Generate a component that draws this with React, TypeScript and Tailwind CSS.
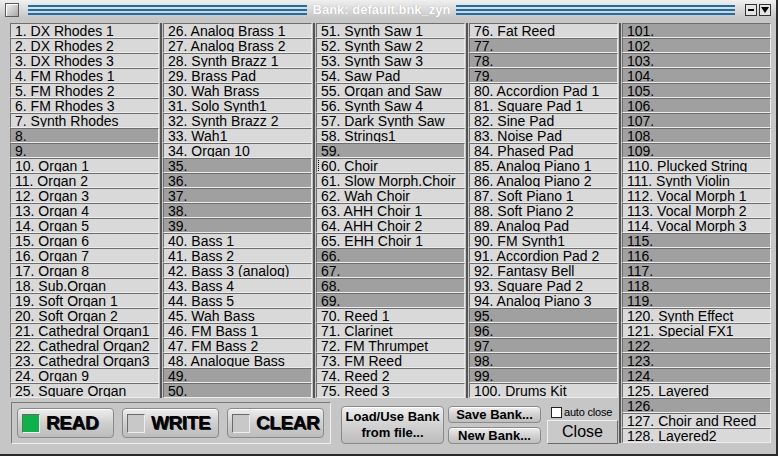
import React from "react";

type Slot = { n: number; name: string };

const names: Record<number, string> = {
  1: "DX Rhodes 1", 2: "DX Rhodes 2", 3: "DX Rhodes 3", 4: "FM Rhodes 1", 5: "FM Rhodes 2",
  6: "FM Rhodes 3", 7: "Synth Rhodes", 10: "Organ 1", 11: "Organ 2", 12: "Organ 3",
  13: "Organ 4", 14: "Organ 5", 15: "Organ 6", 16: "Organ 7", 17: "Organ 8",
  18: "Sub.Organ", 19: "Soft Organ 1", 20: "Soft Organ 2", 21: "Cathedral Organ1",
  22: "Cathedral Organ2", 23: "Cathedral Organ3", 24: "Organ 9", 25: "Square Organ",
  26: "Analog Brass 1", 27: "Analog Brass 2", 28: "Synth Brazz 1", 29: "Brass Pad",
  30: "Wah Brass", 31: "Solo Synth1", 32: "Synth Brazz 2", 33: "Wah1", 34: "Organ 10",
  40: "Bass 1", 41: "Bass 2", 42: "Bass 3 (analog)", 43: "Bass 4", 44: "Bass 5",
  45: "Wah Bass", 46: "FM Bass 1", 47: "FM Bass 2", 48: "Analogue Bass",
  51: "Synth Saw 1", 52: "Synth Saw 2", 53: "Synth Saw 3", 54: "Saw Pad",
  55: "Organ and Saw", 56: "Synth Saw 4", 57: "Dark Synth Saw", 58: "Strings1",
  60: "Choir", 61: "Slow Morph.Choir", 62: "Wah Choir", 63: "AHH Choir 1",
  64: "AHH Choir 2", 65: "EHH Choir 1", 70: "Reed 1", 71: "Clarinet",
  72: "FM Thrumpet", 73: "FM Reed", 74: "Reed 2", 75: "Reed 3", 76: "Fat Reed",
  80: "Accordion Pad 1", 81: "Square Pad 1", 82: "Sine Pad", 83: "Noise Pad",
  84: "Phased Pad", 85: "Analog Piano 1", 86: "Analog Piano 2", 87: "Soft Piano 1",
  88: "Soft Piano 2", 89: "Analog Pad", 90: "FM Synth1", 91: "Accordion Pad 2",
  92: "Fantasy Bell", 93: "Square Pad 2", 94: "Analog Piano 3", 100: "Drums Kit",
  110: "Plucked String", 111: "Synth Violin", 112: "Vocal Morph 1", 113: "Vocal Morph 2",
  114: "Vocal Morph 3", 120: "Synth Effect", 121: "Special FX1", 125: "Layered",
  127: "Choir and Reed", 128: "Layered2",
};

const slots = (from: number, to: number): Slot[] => {
  const out: Slot[] = [];
  for (let i = from; i <= to; i++) out.push({ n: i, name: names[i] ?? "" });
  return out;
};

const font = { fontFamily: '"Liberation Sans", Arial, sans-serif' };

function SlotButton({ slot }: { slot: Slot }) {
  const empty = slot.name === "";
  const selected = slot.n === 60;
  return (
    <div
      className={`h-[15px] border-t border-l border-t-[#6e6e6e] border-l-[#6e6e6e] border-b border-r border-b-[#ececec] border-r-[#ececec] pl-[4px] text-[14px] leading-[15px] text-black whitespace-nowrap overflow-hidden ${
        empty ? "bg-[#a0a0a0]" : "bg-[#d9d9d9]"
      }`}
    >
      <span
        className={
          selected
            ? "inline-block h-[13px] leading-[14px] align-top outline outline-1 outline-dotted outline-black -ml-[2px] pl-[2px] w-[145px]"
            : ""
        }
      >
        {slot.n}. {slot.name}
      </span>
    </div>
  );
}

function Column({ items }: { items: Slot[] }) {
  return (
    <div className="w-[149px] flex flex-col">
      {items.map((s) => (
        <SlotButton key={s.n} slot={s} />
      ))}
    </div>
  );
}

// dark divider line sitting in the gap between two columns
function Divider({ className = "" }: { className?: string }) {
  return <div className={`w-[2px] -mx-[3px] bg-[#555] ${className}`} />;
}

function Stripes() {
  return (
    <div className="flex-1 flex flex-col gap-[2px] justify-center">
      <div className="h-[2px] bg-[#1c6ea8]" />
      <div className="h-[2px] bg-[#1c6ea8]" />
      <div className="h-[2px] bg-[#1c6ea8]" />
    </div>
  );
}

function PlasticButton({ label, on }: { label: string; on?: boolean }) {
  return (
    <div className="w-[97px] h-[30px] rounded-[4px] border border-[#8a8a8a] bg-gradient-to-b from-[#eeeeee] via-[#cfcfcf] to-[#bcbcbc] flex items-center pl-[4px] gap-[6px] shadow-[inset_0_1px_0_#fff]">
      <div
        className={`w-[18px] h-[19px] border border-t-[#6a6a6a] border-l-[#6a6a6a] border-b-[#eeeeee] border-r-[#eeeeee] ${
          on ? "bg-[#0fb24a]" : "bg-[#c8c8c8]"
        }`}
      />
      <span className="text-[19px] font-bold text-black tracking-[-0.4px] [text-shadow:1px_1px_0_#222]">{label}</span>
    </div>
  );
}

function SmallPlastic({ children, className }: { children: React.ReactNode; className: string }) {
  return (
    <div
      className={`rounded-[4px] border border-[#8a8a8a] bg-gradient-to-b from-[#eeeeee] via-[#d2d2d2] to-[#bdbdbd] flex flex-col items-center justify-center text-[13px] font-bold leading-[16px] text-black shadow-[inset_0_1px_0_#fff] ${className}`}
    >
      {children}
    </div>
  );
}

export default function App() {
  return (
    <div className="w-[778px] h-[456px] bg-[#c6c6c6] flex flex-col border-r-2 border-b-2 border-[#2a2a2a]" style={font}>
      {/* Title bar */}
      <div className="h-[19px] flex items-center gap-[6px] pl-[5px] pr-[5px] bg-gradient-to-b from-[#f0f0f0] to-[#c4c4c4]">
        <div className="w-[14px] h-[14px] border border-[#5a5a5a] bg-gradient-to-br from-[#f4f4f4] to-[#a8a8a8] shadow-[inset_1px_1px_0_#fff]" />
        <div className="flex-1 flex items-center gap-[4px] pl-[3px]">
          <Stripes />
          <span className="text-[13px] font-bold text-white px-[2px] [text-shadow:0_0_1px_#9a9a9a]">Bank: default.bnk_zyn</span>
          <Stripes />
        </div>
        <div className="flex gap-[2px] pl-[4px]">
          <div className="w-[12px] h-[12px] border border-[#333] bg-[#e4e4e4] flex items-center justify-center">
            <div className="w-[6px] h-[2px] bg-black" />
          </div>
          <div className="w-[12px] h-[12px] border border-[#333] bg-[#e4e4e4] flex items-center justify-center">
            <svg width="8" height="6" viewBox="0 0 8 6">
              <polygon points="0,0 8,0 4,6" fill="#000" />
            </svg>
          </div>
        </div>
      </div>

      {/* Body */}
      <div className="flex pl-[10px] pt-[4px] gap-[4px]">
        <div className="w-[608px] flex flex-col">
          <div className="flex gap-[4px]">
            <Column items={slots(1, 25)} />
            <Divider />
            <Column items={slots(26, 50)} />
            <Divider />
            <Column items={slots(51, 75)} />
            <Divider />
            <Column items={slots(76, 100)} />
          </div>

          {/* Bottom controls */}
          <div className="flex items-start mt-[4px]">
            <div className="ml-[1px] w-[320px] h-[42px] border border-t-[#7a7a7a] border-l-[#7a7a7a] border-b-[#efefef] border-r-[#efefef] flex items-center gap-[8px] pl-[5px]">
              <PlasticButton label="READ" on />
              <PlasticButton label="WRITE" />
              <PlasticButton label="CLEAR" />
            </div>
            <SmallPlastic className="ml-[10px] mt-[4px] w-[103px] h-[38px]">
              <span>Load/Use Bank</span>
              <span>from file...</span>
            </SmallPlastic>
            <div className="ml-[4px] mt-[4px] flex flex-col gap-[4px]">
              <SmallPlastic className="w-[93px] h-[17px]">Save Bank...</SmallPlastic>
              <SmallPlastic className="w-[93px] h-[17px]">New Bank...</SmallPlastic>
            </div>
            <div className="ml-[6px] mt-[3px] flex flex-col">
              <div className="flex items-center gap-[2px] pl-[4px] h-[14px]">
                <div className="w-[11px] h-[11px] border border-[#222] bg-white" />
                <span className="text-[11px] tracking-[-0.2px] text-black">auto close</span>
              </div>
              <div className="w-[71px] h-[24px] mt-[1px] border border-t-[#f0f0f0] border-l-[#f0f0f0] border-b-[#6a6a6a] border-r-[#6a6a6a] bg-[#c9c9c9] flex items-center justify-center text-[16px] text-black">
                Close
              </div>
            </div>
          </div>
        </div>
        <Divider className="h-[420px]" />
        <Column items={slots(101, 128)} />
      </div>
    </div>
  );
}
